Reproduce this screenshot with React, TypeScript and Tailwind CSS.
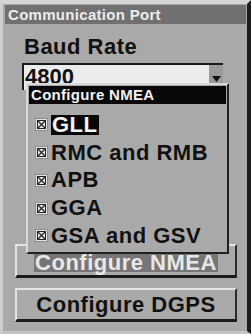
import React from "react";

const Check = () => (
  <svg width="13" height="13" viewBox="0 0 13 13" className="shrink-0">
    <rect x="0.5" y="0.5" width="12" height="12" fill="#e6e6e6" stroke="#8a8a8a" />
    <rect x="2.5" y="2.5" width="8" height="8" fill="none" stroke="#222" strokeWidth="1" />
    <path d="M3 3 L10 10 M10 3 L3 10" stroke="#222" strokeWidth="1.2" />
  </svg>
);

const items = ["GLL", "RMC and RMB", "APB", "GGA", "GSA and GSV"];

export default function App() {
  return (
    <div
      className="relative w-[251px] h-[334px] bg-[#a9a9a9] border-t-[4px] border-l-[3px] border-b-[3px] border-r-[4px] border-t-[#d4d4d4] border-l-[#cfcfcf] border-b-[#c4c4c4] border-r-[#1c1c1c] overflow-hidden"
      style={{ fontFamily: '"Liberation Sans", Arial, sans-serif' }}
    >
      <div className="ml-[2px] mr-[1px] mt-[1px] h-[19px] bg-[#707070] pl-[3px] text-[15px] font-bold leading-[19px] text-[#ececec] tracking-[0.3px]">
        Communication Port
      </div>

      <div className="ml-[21px] mt-[11px] text-[22px] font-bold leading-[24px] tracking-[0.5px] text-[#111]">
        Baud Rate
      </div>

      <div className="ml-[19px] mt-[4px] flex h-[27px] w-[201px] border-l-2 border-t-2 border-[#1a1a1a] bg-[#ececec]">
        <div className="flex-1 pl-[1px] pt-[3px] text-[22px] font-bold leading-[18px] text-[#111]">4800</div>
        <div className="flex w-[14px] items-start justify-center bg-[#9a9a9a] pt-[11px]">
          <svg width="9" height="6" viewBox="0 0 9 6">
            <path d="M0 0 L9 0 L4.5 6 Z" fill="#111" />
          </svg>
        </div>
      </div>

      <div className="ml-[12px] mt-[154px] h-[34px] w-[222px] border-l-2 border-t-2 border-l-[#e4e4e4] border-t-[#e4e4e4] border-r-2 border-b-[3px] border-r-[#2a2a2a] border-b-[#1a1a1a] flex items-center justify-center">
        <span className="mt-[4px] bg-[#767676] px-[1px] text-[22px] font-bold leading-[18px] tracking-[0.5px] text-[#e8e8e8]">
          Configure NMEA
        </span>
      </div>

      <div className="ml-[12px] mt-[10px] h-[34px] w-[222px] border-l-2 border-t-2 border-l-[#e4e4e4] border-t-[#e4e4e4] border-r-2 border-b-[3px] border-r-[#2a2a2a] border-b-[#1a1a1a] flex items-center justify-center">
        <span className="text-[22px] font-bold leading-[22px] tracking-[0.5px] text-[#111]">
          Configure DGPS
        </span>
      </div>

      <div className="absolute left-[23px] top-[79px] w-[203px] h-[171px] bg-[#a9a9a9] border-l-2 border-t-2 border-l-[#d8d8d8] border-t-[#d8d8d8] border-r-2 border-b-2 border-r-[#202020] border-b-[#202020] px-[1px] pt-[1px]">
        <div className="h-[18px] bg-[#080808] pl-[2px] text-[15px] font-bold leading-[18px] tracking-[0.3px] text-[#f2f2f2]">
          Configure NMEA
        </div>
        <div className="mt-[7px] flex flex-col">
          {items.map((t, i) => (
            <div key={t} className="flex h-[27.75px] items-center gap-[3px] pl-[6px]">
              <Check />
              <span
                className={`text-[22px] font-bold leading-[20px] tracking-[0.5px] ${
                  i === 0 ? "bg-[#080808] text-[#f4f4f4] px-[1px]" : "text-[#111]"
                }`}
              >
                {t}
              </span>
            </div>
          ))}
        </div>
      </div>
    </div>
  );
}
